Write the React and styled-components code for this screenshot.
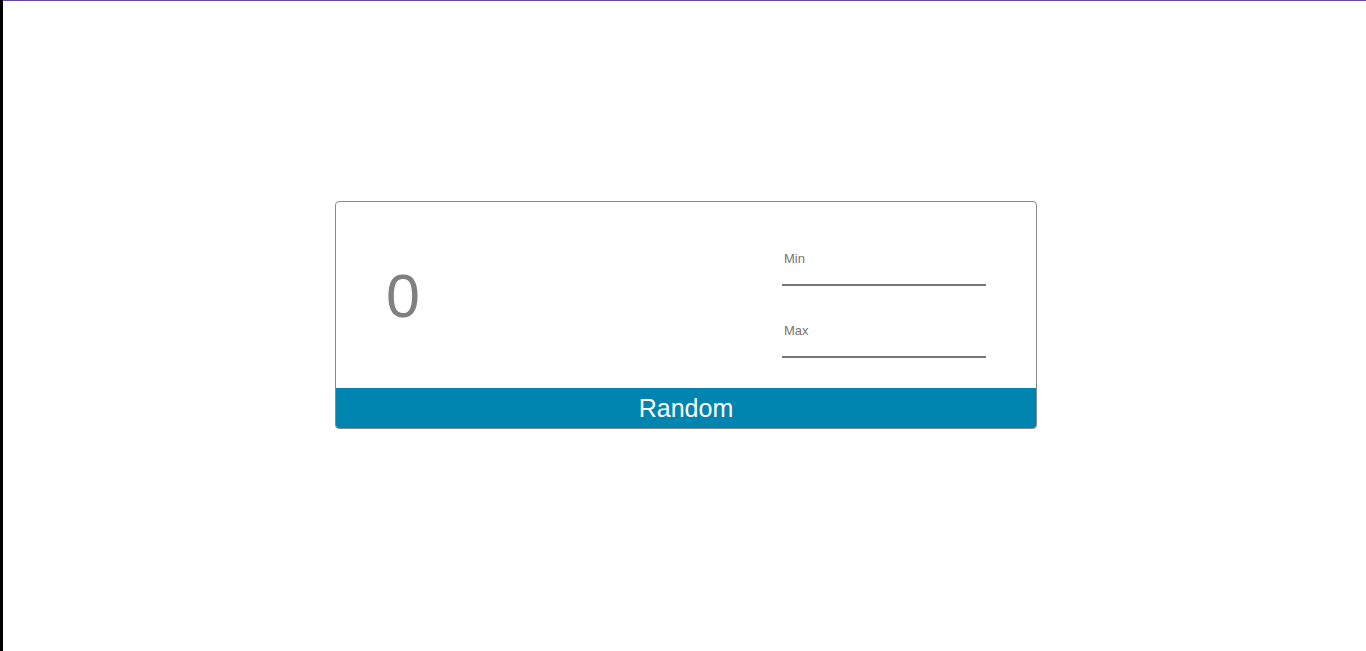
import React, { useState } from "react";
import styled, { createGlobalStyle } from "styled-components";

const GlobalStyle = createGlobalStyle`
  html, body {
    margin: 0;
    padding: 0;
    height: 100%;
    background: #fff;
    font-family: "Liberation Sans", Arial, sans-serif;
  }
  #root {
    height: 100%;
  }
`;

const Page = styled.div`
  display: flex;
  height: 100%;
  min-height: 651px;
`;

const SideStrip = styled.div`
  width: 3px;
  flex-shrink: 0;
  background: #000;
`;

const Main = styled.main`
  flex: 1;
  display: flex;
  justify-content: center;
  align-items: flex-start;
  border-top: 1px solid #6747a8;
  padding: 200px 0 0 3px;
`;

const Card = styled.div`
  width: 702px;
  box-sizing: border-box;
  border: 1px solid #8a8a8a;
  border-radius: 4px;
  overflow: hidden;
  display: flex;
  flex-direction: column;
`;

const Body = styled.div`
  height: 186px;
  display: flex;
  justify-content: space-between;
  align-items: flex-start;
`;

const Result = styled.div`
  align-self: center;
  margin: 2px 0 0 50px;
  font-size: 61px;
  line-height: 1;
  color: #808080;
`;

const Fields = styled.div`
  width: 204px;
  margin: 48px 50px 0 0;
  display: flex;
  flex-direction: column;
  gap: 36px;
`;

const Field = styled.label`
  display: flex;
  flex-direction: column;
`;

const FieldLabel = styled.span`
  font-size: 13px;
  line-height: 16px;
  padding: 1px 0 0 2px;
  margin-bottom: -1px;
  color: #757575;
`;

const Input = styled.input`
  height: 18px;
  padding: 0 2px;
  border: none;
  border-bottom: 2px solid #777;
  outline: none;
  font-family: inherit;
  font-size: 14px;
  color: #555;
  background: transparent;
`;

const RandomButton = styled.button`
  height: 40px;
  border: none;
  margin: 0;
  background: #0084b0;
  color: #fff;
  font-family: "Liberation Sans", Arial, sans-serif;
  font-size: 25px;
  cursor: pointer;
`;

const App = () => {
  const [min, setMin] = useState("");
  const [max, setMax] = useState("");
  const [value, setValue] = useState(0);

  const onRandom = () => {
    const lo = parseInt(min) || 0;
    const hi = parseInt(max) || 0;
    const a = Math.min(lo, hi);
    const b = Math.max(lo, hi);
    setValue(Math.floor(Math.random() * (b - a + 1)) + a);
  };

  return (
    <>
      <GlobalStyle />
      <Page>
        <SideStrip />
        <Main>
          <Card>
            <Body>
              <Result>{value}</Result>
              <Fields>
                <Field>
                  <FieldLabel>Min</FieldLabel>
                  <Input value={min} onChange={(e) => setMin(e.target.value)} />
                </Field>
                <Field>
                  <FieldLabel>Max</FieldLabel>
                  <Input value={max} onChange={(e) => setMax(e.target.value)} />
                </Field>
              </Fields>
            </Body>
            <RandomButton onClick={onRandom}>Random</RandomButton>
          </Card>
        </Main>
      </Page>
    </>
  );
};

export default App;
